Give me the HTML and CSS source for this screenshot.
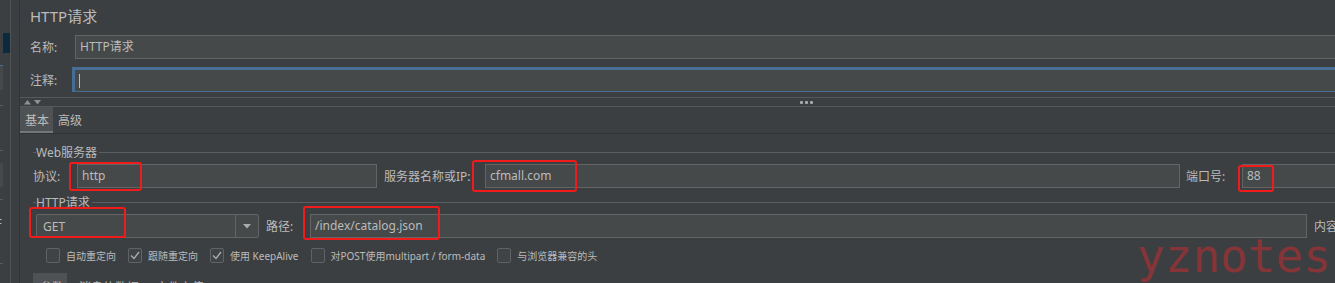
FILE: index.html
```html
<!DOCTYPE html>
<html lang="zh">
<head>
<meta charset="utf-8">
<title>HTTP请求</title>
<link rel="stylesheet" href="styles.css">
</head>
<body>
<div class="app">
  <aside class="side">
    <div class="side-sel"></div>
    <div class="side-box side-box-blue"></div>
    <div class="side-line l1"></div>
    <div class="side-line l2"></div>
    <div class="side-box side-box-2"></div>
    <div class="side-line l3"></div>
    <div class="side-glyph">F</div>
    <div class="side-line l4"></div>
  </aside>
  <div class="split"></div>
  <main class="main">
    <h1 class="title">HTTP请求</h1>
    <div class="field-row name-row">
      <span class="lbl lbl-name">名称:</span>
      <div class="input">HTTP请求</div>
    </div>
    <div class="field-row comment-row">
      <span class="lbl lbl-name">注释:</span>
      <div class="input focused"><span class="caret"></span></div>
    </div>
    <div class="splitbar">
      <span class="arrows">
        <svg width="18" height="6" viewBox="0 0 18 6"><path d="M0 5.5 L3.5 1 L7 5.5 Z" fill="#8c9194"/><path d="M10 1 L17 1 L13.5 5.5 Z" fill="#8c9194"/></svg>
      </span>
      <span class="dots"><i></i><i></i><i></i></span>
    </div>
    <div class="tabs">
      <span class="tab active">基本</span>
      <span class="tab">高级</span>
    </div>
    <section class="panel">
      <div class="group-title"><span>Web服务器</span></div>
      <div class="row row1">
        <span class="lbl w-proto">协议:</span>
        <div class="input w300">http</div>
        <span class="lbl w-host">服务器名称或IP:</span>
        <div class="input grow">cfmall.com</div>
        <span class="lbl w-port">端口号:</span>
        <div class="input w-portin">88</div>
      </div>
      <div class="group-title g2"><span>HTTP请求</span></div>
      <div class="row row2">
        <div class="combo">
          <span class="combo-val">GET</span>
          <span class="combo-btn"><svg width="8" height="5" viewBox="0 0 8 5"><path d="M0 0 L8 0 L4 4.5 Z" fill="#a9acae"/></svg></span>
        </div>
        <span class="lbl w-path">路径:</span>
        <div class="input grow">/index/catalog.json</div>
        <span class="lbl w-enc">内容编码:</span>
        <div class="input w-encin"></div>
      </div>
      <div class="checks">
        <label class="chk"><span class="box"></span>自动重定向</label>
        <label class="chk"><span class="box on"><svg width="10" height="9" viewBox="0 0 10 9"><path d="M1 4.5 L4 7.5 L9 1" fill="none" stroke="#a9acae" stroke-width="1.4"/></svg></span>跟随重定向</label>
        <label class="chk"><span class="box on"><svg width="10" height="9" viewBox="0 0 10 9"><path d="M1 4.5 L4 7.5 L9 1" fill="none" stroke="#a9acae" stroke-width="1.4"/></svg></span>使用 KeepAlive</label>
        <label class="chk"><span class="box"></span>对POST使用multipart / form-data</label>
        <label class="chk"><span class="box"></span>与浏览器兼容的头</label>
      </div>
      <div class="subtabs">
        <span class="subtab active">参数</span>
        <span class="subtab">消息体数据</span>
        <span class="subtab">文件上传</span>
      </div>
    </section>
  </main>
</div>

<div class="mark m-proto"></div>
<div class="mark m-host"></div>
<div class="mark m-port"></div>
<div class="mark m-get"></div>
<div class="mark m-path"></div>
<div class="watermark">yznotes</div>
</body>
</html>
```
FILE: styles.css
```css
html, body {
  margin: 0;
  padding: 0;
  background: #3c3f41;
  width: 1335px;
  height: 283px;
  overflow: hidden;
}
body {
  position: relative;
  color: #bbbbbb;
  font-family: "Noto Sans", "Noto Sans CJK SC", sans-serif;
  font-size: 12px;
}
.app {
  display: flex;
  align-items: flex-start;
  height: 283px;
}
/* sidebar */
.side {
  width: 10px;
  height: 283px;
  flex: none;
  display: flex;
  flex-direction: column;
}
.side > * { flex: none; }
.side-sel {
  margin: 33px 0 0 3px;
  height: 20px;
  background: #0d293e;
}
.side-box {
  width: 3px;
  background: #45494a;
}
.side-box-blue {
  margin-top: 12px;
  height: 24px;
  border-top: 1px solid #4a6d93;
}
.side-line {
  height: 1px;
  width: 3px;
  background: #5a5d5f;
}
.l1 { margin-top: 15px; }
.l2 { margin-top: 44px; }
.side-box-2 { margin-top: 12px; height: 24px; }
.l3 { margin-top: 12px; }
.side-glyph {
  margin-top: 17px;
  font-size: 11px;
  line-height: 12px;
  width: 3px;
  overflow: hidden;
  text-indent: -4px;
}
.l4 { margin-top: 34px; }
.split {
  width: 10px;
  height: 283px;
  flex: none;
  box-sizing: border-box;
  border-left: 1px solid #4e5254;
  border-right: 1px solid #323537;
}
/* main */
.main {
  flex: none;
  width: 1440px;
  display: flex;
  flex-direction: column;
}
.main > * { flex: none; }
.title {
  margin: 0;
  height: 35px;
  line-height: 32px;
  padding-left: 10px;
  font-size: 15px;
  font-weight: normal;
}
.field-row {
  display: flex;
  align-items: center;
  padding-left: 10px;
}
.lbl {
  flex: none;
  white-space: nowrap;
}
.lbl-name { width: 45px; }
.input {
  box-sizing: border-box;
  height: 24px;
  line-height: 22px;
  background: #45494a;
  border: 1px solid #646464;
  padding-left: 4px;
  white-space: nowrap;
  flex: 1;
  overflow: hidden;
}
.comment-row { margin-top: 8px; }
.comment-row .lbl { width: 42px; }
.input.focused {
  height: 25px;
  border-color: #466d94;
  border-width: 3px 1px 1px 3px;
  border-top-color: #4a6f96;
  padding-left: 3px;
  display: flex;
  align-items: center;
}
.caret {
  width: 1px;
  height: 14px;
  background: #bbbbbb;
  margin-left: 1px;
}
.splitbar {
  margin-top: 5px;
  height: 10px;
  box-sizing: border-box;
  border-top: 1px solid #55595b;
  border-bottom: 1px solid #55595b;
  display: flex;
  align-items: center;
}
.arrows {
  display: flex;
  margin-left: 4px;
}
.dots {
  display: flex;
  gap: 2px;
  margin-left: 758px;
}
.dots i {
  width: 3px;
  height: 3px;
  background: #a6aaad;
  border-radius: 1px;
}
.tabs {
  display: flex;
  height: 27px;
  box-sizing: border-box;
  border-bottom: 1px solid #313335;
}
.tab {
  padding: 2px 5px 0;
  line-height: 24px;
  height: 26px;
  box-sizing: border-box;
}
.tab.active {
  background: #4e5254;
  box-shadow: inset 0 -2px 0 #72777b;
  padding: 2px 4px 0 5px;
}
/* panel */
.panel {
  padding: 8px 7px 0 13px;
  display: flex;
  flex-direction: column;
}
.panel > * { flex: none; }
.group-title {
  display: flex;
  align-items: center;
  height: 20px;
}
.group-title::before {
  content: "";
  width: 3px;
  height: 1px;
  background: #5b5e60;
}
.group-title::after {
  content: "";
  flex: 1;
  height: 1px;
  background: #5b5e60;
  margin-left: 2px;
}
.g2 { margin-top: 4px; }
.row {
  display: flex;
  align-items: center;
  margin-top: 2px;
}
.w-proto { width: 44px; }
.w300 { flex: none; width: 300px; margin-right: 7px; }
.w-host { width: 101px; }
.grow { flex: 1; }
.w-port { width: 56px; margin-left: 6px; }
.w-portin { flex: none; width: 211px; }
.row2 { padding-left: 3px; }
.combo {
  flex: none;
  width: 223px;
  height: 24px;
  box-sizing: border-box;
  border: 1px solid #646464;
  border-radius: 2px;
  background: #45494a;
  display: flex;
  align-items: center;
  margin-right: 7px;
}
.combo-val {
  flex: 1;
  padding-left: 6px;
}
.combo-btn {
  width: 22px;
  height: 22px;
  border-left: 1px solid #646464;
  display: flex;
  align-items: center;
  justify-content: center;
}
.w-path { width: 44px; }
.w-enc { width: 60px; margin-left: 7px; }
.w-encin { flex: none; width: 79px; }
.checks {
  display: flex;
  align-items: center;
  margin-top: 9px;
  padding-left: 13px;
  height: 16px;
  font-size: 10px;
}
.chk {
  display: flex;
  align-items: center;
  margin-right: 12px;
  white-space: nowrap;
}
.box {
  width: 14px;
  height: 15px;
  box-sizing: border-box;
  border: 1px solid #606365;
  border-radius: 2px;
  background: #3f4345;
  margin-right: 6px;
  display: flex;
  align-items: center;
  justify-content: center;
}
.subtabs {
  display: flex;
  margin-top: 10px;
  height: 20px;
}
.subtab {
  padding: 8px 5px 0 7px;
  line-height: 14px;
  margin-right: 5px;
}
.subtab.active {
  background: #4e5254;
  padding: 8px 3px 0 7px;
}
/* annotation overlays */
.mark {
  position: absolute;
  box-sizing: border-box;
  border: 2px solid #f01b1b;
  border-radius: 3px;
}
.m-proto { left: 69px; top: 162px; width: 73px; height: 29px; }
.m-host { left: 472px; top: 160px; width: 105px; height: 32px; }
.m-port { left: 1238px; top: 165px; width: 36px; height: 27px; }
.m-get { left: 29px; top: 207px; width: 97px; height: 31px; }
.m-path { left: 303px; top: 206px; width: 137px; height: 34px; }
.watermark {
  position: absolute;
  left: 1137px;
  top: 236px;
  font-family: "DejaVu Sans Mono", monospace;
  font-size: 46px;
  line-height: 40px;
  color: #853438;
  white-space: nowrap;
}
```
